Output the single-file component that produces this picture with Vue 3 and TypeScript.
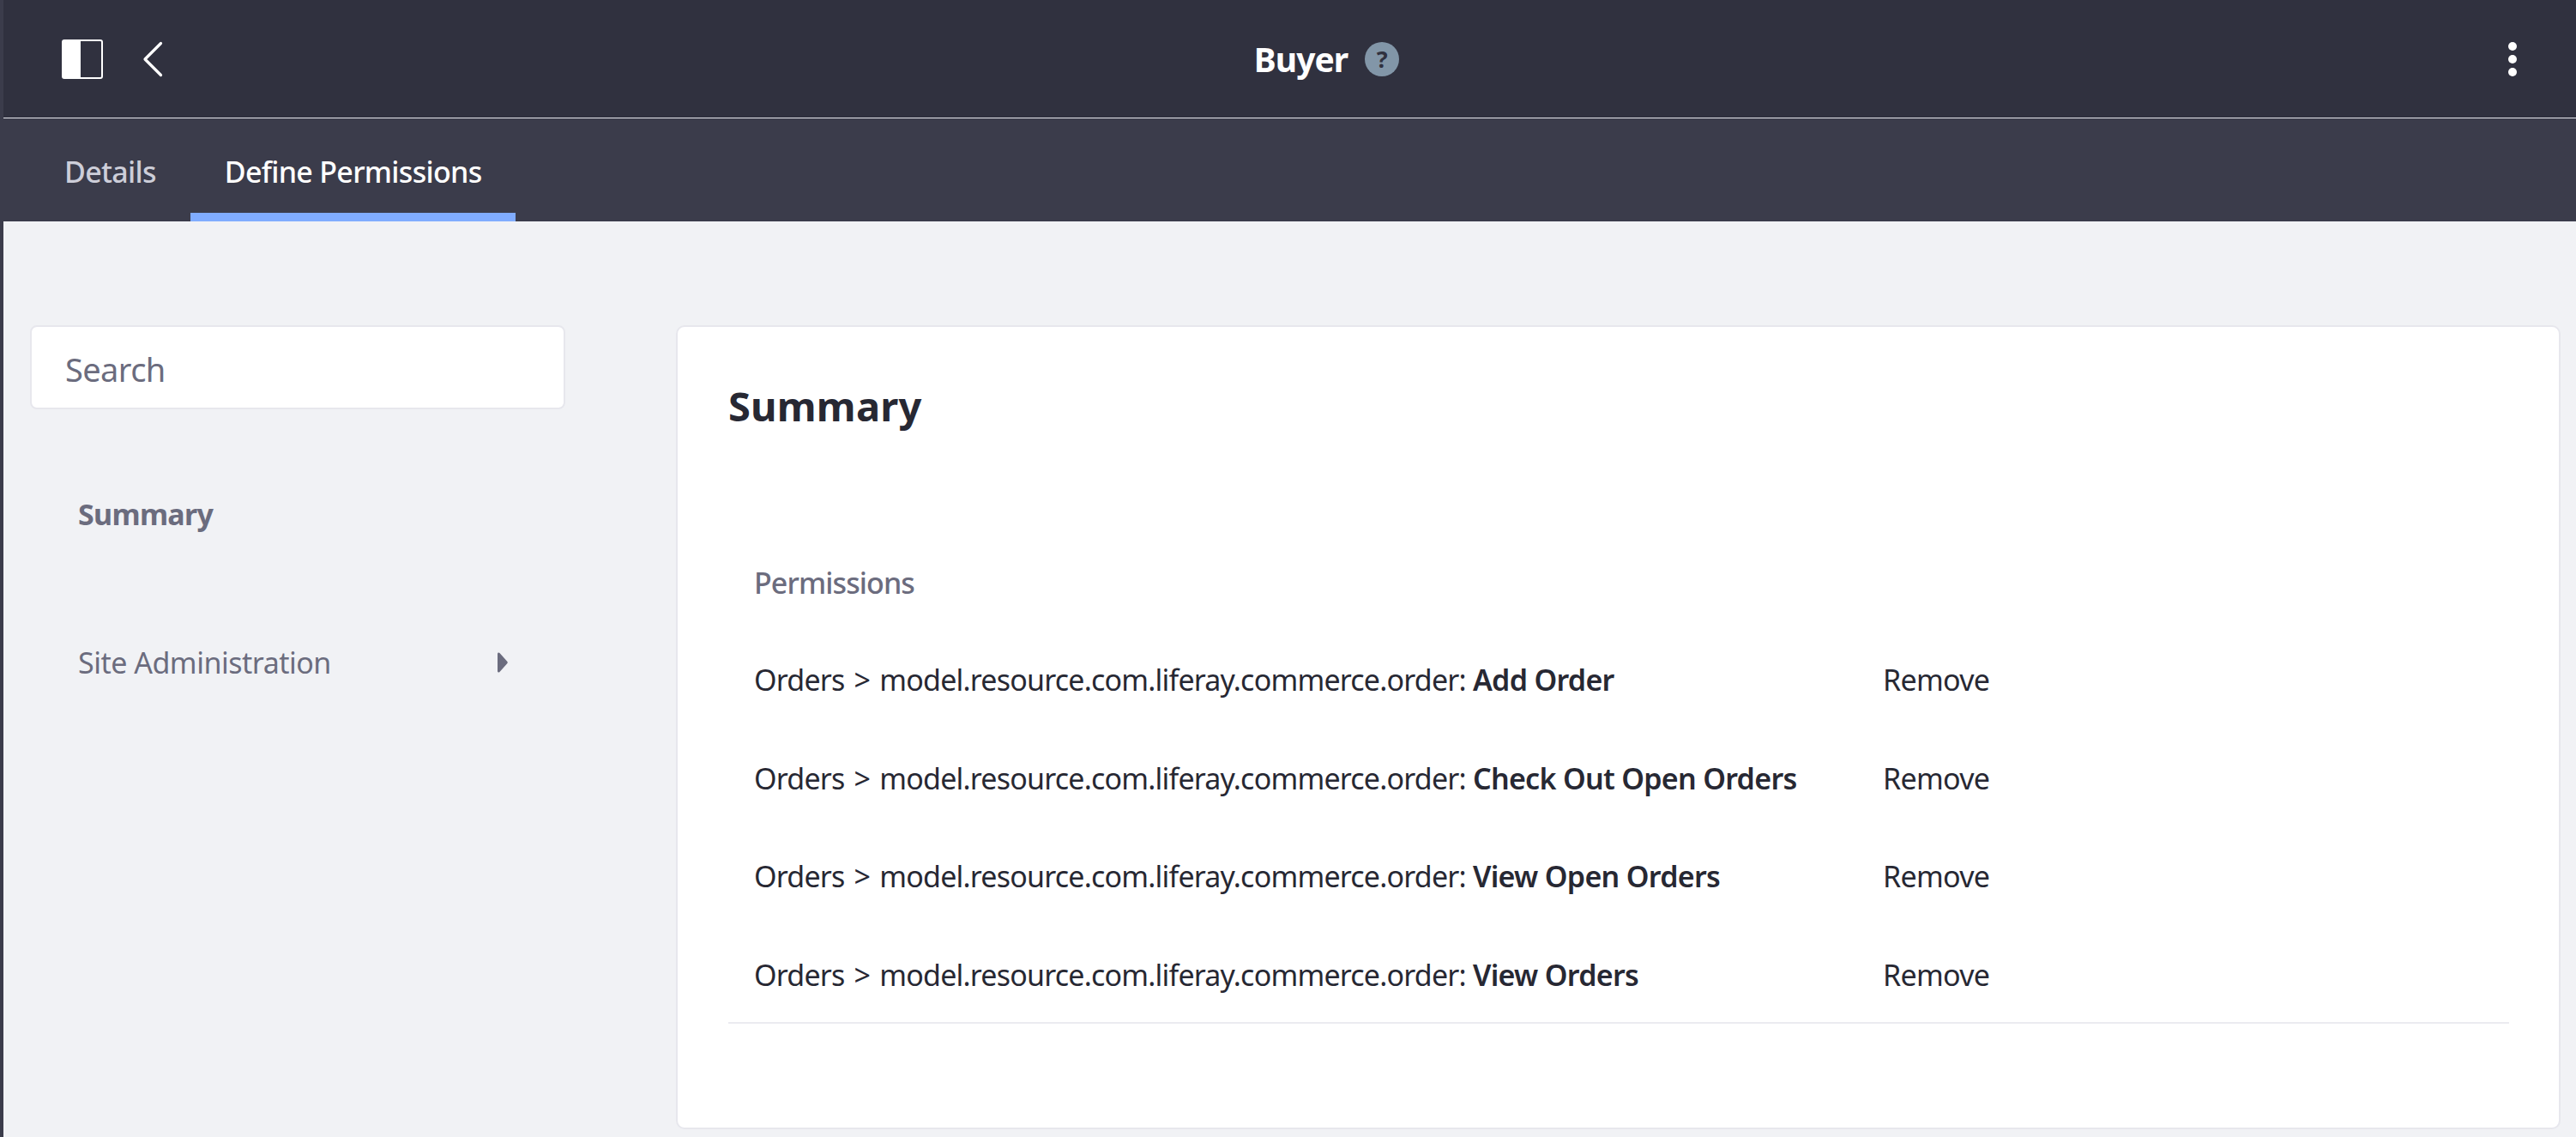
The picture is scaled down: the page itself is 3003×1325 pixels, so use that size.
<script setup lang="ts">
const rows: string[] = ['Add Order', 'Check Out Open Orders', 'View Open Orders', 'View Orders']
const prefix = 'model.resource.com.liferay.commerce.order: '
</script>

<template>
  <div class="page">
    <header class="topbar">
      <div class="topbar-left">
        <svg class="panel-icon" width="48" height="46" viewBox="0 0 48 46">
          <rect x="1" y="1" width="46" height="44" rx="2" fill="none" stroke="#fff" stroke-width="2" />
          <path d="M3 1h19v44H3a2 2 0 0 1-2-2V3a2 2 0 0 1 2-2z" fill="#fff" />
        </svg>
        <svg class="back-icon" width="24" height="42" viewBox="0 0 24 42">
          <path d="M21.500 2.500 3 21l18.500 18.500" fill="none" stroke="#fff" stroke-width="3.200" stroke-linecap="round" stroke-linejoin="round" />
        </svg>
      </div>
      <div class="title">
        <span>Buyer</span>
        <span class="help">?</span>
      </div>
      <div class="dots"><i></i><i></i><i></i></div>
    </header>

    <nav class="tabs">
      <a class="tab">Details</a>
      <a class="tab active">Define Permissions</a>
    </nav>

    <main class="content">
      <aside class="side">
        <div class="search">Search</div>
        <div class="nav-item nav-strong">Summary</div>
        <div class="nav-item nav-site">
          <span>Site Administration</span>
          <svg width="13" height="24" viewBox="0 0 13 24"><path d="M1 2c0-1.500 1.500-2 2.500-1L12 10.500c1 1 1 2 0 3L3.500 23c-1 1-2.500.5-2.500-1z" fill="#6b6c7e" /></svg>
        </div>
      </aside>

      <section class="card">
        <h2>Summary</h2>
        <div class="perm-head">Permissions</div>
        <div v-for="r in rows" :key="r" class="perm-row">
          <div class="perm-name"><span class="crumb">Orders &gt; </span>{{ prefix }}<b>{{ r }}</b></div>
          <div class="perm-remove">Remove</div>
        </div>
        <div class="rule"></div>
      </section>
    </main>
  </div>
</template>

<style>
html, body { margin: 0; background: #f1f2f5; }
</style>

<style scoped>
.page {
  height: 1325px;
  overflow: hidden;
  display: flex;
  flex-direction: column;
  border-left: 4px solid #3b3c4b;
  box-sizing: border-box;
  font-family: "Noto Sans", "Open Sans", sans-serif;
  font-size: 34px;
  letter-spacing: -0.7px;
  color: #272833;
  background: #f1f2f5;
}

.topbar {
  height: 138px;
  box-sizing: border-box;
  flex-shrink: 0;
  background: #30313f;
  border-bottom: 1px solid #e7e7ed;
  display: grid;
  grid-template-columns: 1fr auto 1fr;
  align-items: center;
}

.topbar-left {
  display: flex;
  align-items: center;
  gap: 46px;
  padding-left: 68px;
}

.title {
  display: flex;
  align-items: center;
  gap: 20px;
  color: #fff;
  font-size: 39px;
  font-weight: 700;
  letter-spacing: -1px;
  padding-left: 86px;
}

.help {
  width: 40px;
  height: 40px;
  border-radius: 50%;
  background: #8296a8;
  color: #30313f;
  font-size: 27px;
  letter-spacing: 0;
  display: flex;
  align-items: center;
  justify-content: center;
}

.dots {
  justify-self: end;
  display: flex;
  flex-direction: column;
  gap: 5px;
  padding-right: 69px;
}

.dots i {
  width: 10px;
  height: 10px;
  border-radius: 50%;
  background: #fff;
}

.tabs {
  height: 120px;
  flex-shrink: 0;
  background: #3b3c4b;
  display: flex;
  padding-left: 31px;
}

.tab {
  padding: 13px 40px 0;
  display: flex;
  align-items: center;
  color: #cdced9;
  font-weight: 500;
  border-bottom: 10px solid transparent;
  box-sizing: border-box;
}

.tab.active {
  color: #fff;
  border-bottom-color: #80acff;
}

.content {
  flex: 1;
  display: flex;
  align-items: flex-start;
  padding: 121px 18px 0 31px;
  gap: 129px;
}

.side {
  width: 624px;
  flex-shrink: 0;
}

.search {
  height: 98px;
  box-sizing: border-box;
  background: #fff;
  border: 2px solid #e7e7ed;
  border-radius: 8px;
  padding: 3px 0 0 39px;
  display: flex;
  align-items: center;
  color: #6b6c7e;
  font-size: 38px;
  letter-spacing: -0.6px;
}

.nav-item {
  color: #6b6c7e;
  padding-left: 56px;
  line-height: 46px;
}

.nav-strong {
  font-weight: 700;
  margin-top: 99px;
}

.nav-site {
  margin-top: 127px;
  display: flex;
  justify-content: space-between;
  align-items: center;
  padding-right: 67px;
  letter-spacing: -0.5px;
}

.card {
  flex: 1;
  height: 937px;
  box-sizing: border-box;
  background: #fff;
  border: 2px solid #e7e7ed;
  border-radius: 10px;
  padding: 0 58px 0 59px;
}

h2 {
  margin: 64px 0 0;
  font-size: 47px;
  line-height: 56px;
  font-weight: 700;
  letter-spacing: 0.2px;
}

.perm-head {
  margin-top: 155px;
  padding-left: 30px;
  line-height: 46px;
  color: #6b6c7e;
  font-weight: 500;
  letter-spacing: -0.9px;
}

.perm-row {
  display: flex;
  align-items: center;
  height: 114.500px;
  padding-left: 30px;
}

.perm-head + .perm-row { margin-top: 33px; }

.perm-name {
  width: 1316px;
  flex-shrink: 0;
  white-space: pre;
  letter-spacing: -0.8px;
}

.crumb { word-spacing: 3px; }

.perm-name b {
  font-weight: 600;
  letter-spacing: -0.7px;
}

.perm-remove { letter-spacing: -0.7px; }

.rule {
  height: 2px;
  background: #ebebf0;
  margin-top: -2px;
}
</style>
